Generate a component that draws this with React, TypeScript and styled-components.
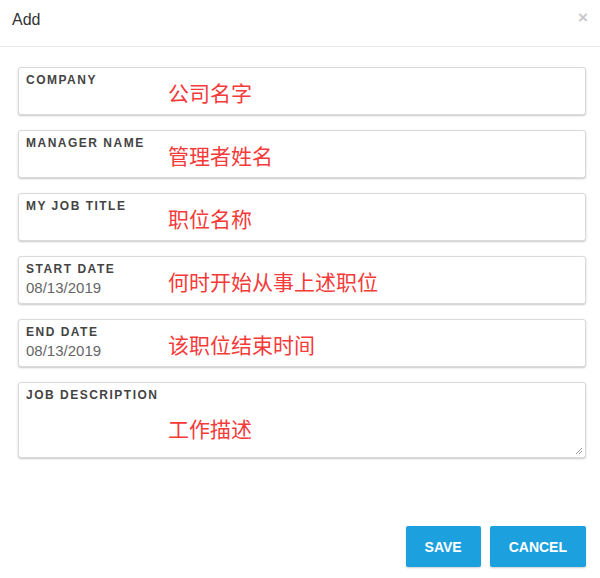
import styled, { createGlobalStyle } from "styled-components"

interface Field {
   label: string
   note: string
   value?: string
   tall?: boolean
}

const fields: Field[] = [
   { label: "COMPANY", note: "公司名字" },
   { label: "MANAGER NAME", note: "管理者姓名" },
   { label: "MY JOB TITLE", note: "职位名称" },
   { label: "START DATE", note: "何时开始从事上述职位", value: "08/13/2019" },
   { label: "END DATE", note: "该职位结束时间", value: "08/13/2019" },
   { label: "JOB DESCRIPTION", note: "工作描述", tall: true },
]

const App = () => {
   return (
      <>
         <GlobalStyle />
         <Dialog>
            <Header>
               <Title>Add</Title>
               <CloseButton>×</CloseButton>
            </Header>
            <Form>
               {fields.map((f) => (
                  <FieldBox key={f.label} tall={f.tall}>
                     <FieldMain>
                        <Label>{f.label}</Label>
                        {f.value && <Value>{f.value}</Value>}
                     </FieldMain>
                     <Note tall={f.tall}>{f.note}</Note>
                     {f.tall && (
                        <Grip width="8" height="8" viewBox="0 0 8 8">
                           <path d="M7 1 L1 7 M7 4 L4 7" stroke="#999" strokeWidth="1" />
                        </Grip>
                     )}
                  </FieldBox>
               ))}
            </Form>
            <Footer>
               <Button>SAVE</Button>
               <Button>CANCEL</Button>
            </Footer>
         </Dialog>
      </>
   )
}

export default App

// Styled Components

const GlobalStyle = createGlobalStyle`
   body {
      margin: 0;
      background: #fff;
      font-family: "Liberation Sans", Arial, sans-serif;
   }
`

const Dialog = styled.div`
   width: 600px;
   height: 578px;
   display: flex;
   flex-direction: column;
   background: #fff;
`

const Header = styled.div`
   height: 47px;
   box-sizing: border-box;
   display: flex;
   justify-content: space-between;
   align-items: center;
   padding: 0 12px 6px 12px;
   border-bottom: 1px solid #ebebeb;
`

const Title = styled.span`
   font-size: 16px;
   color: #333;
`

const CloseButton = styled.span`
   font-size: 17px;
   font-weight: bold;
   color: #c8c8c8;
   margin-top: -4px;
`

const Form = styled.div`
   display: flex;
   flex-direction: column;
   gap: 15px;
   padding: 20px 14px 0 18px;
`

const FieldBox = styled.div<{ tall?: boolean }>`
   position: relative;
   display: flex;
   height: ${({ tall }) => (tall ? "76px" : "48px")};
   box-sizing: border-box;
   padding: 5px 7px;
   border: 1px solid #dadada;
   border-radius: 3px;
   box-shadow: 0 1px 2px rgba(0, 0, 0, 0.22);
   background: #fff;
`

const FieldMain = styled.div`
   width: 142px;
   flex-shrink: 0;
   display: flex;
   flex-direction: column;
`

const Label = styled.span`
   font-size: 12px;
   line-height: 14px;
   font-weight: bold;
   letter-spacing: 1.5px;
   color: #444;
   white-space: nowrap;
`

const Value = styled.span`
   margin-top: 3px;
   font-size: 15px;
   line-height: 17px;
   color: #666;
`

const Note = styled.span<{ tall?: boolean }>`
   align-self: center;
   margin-top: ${({ tall }) => (tall ? "16px" : "2px")};
   font-family: "Noto Sans CJK SC", sans-serif;
   font-size: 21px;
   line-height: 26px;
   color: #f53a3a;
   white-space: nowrap;
`

const Grip = styled.svg`
   position: absolute;
   right: 2px;
   bottom: 2px;
`

const Footer = styled.div`
   display: flex;
   justify-content: flex-end;
   gap: 9px;
   padding: 68px 14px 0 0;
`

const Button = styled.button`
   height: 41px;
   padding: 0 19px;
   border: none;
   border-radius: 2px;
   background: #1ca1de;
   color: #fff;
   font-family: "Liberation Sans", Arial, sans-serif;
   font-size: 14px;
   font-weight: bold;
   box-shadow: 0 1px 2px rgba(0, 0, 0, 0.2);
   cursor: pointer;
`
